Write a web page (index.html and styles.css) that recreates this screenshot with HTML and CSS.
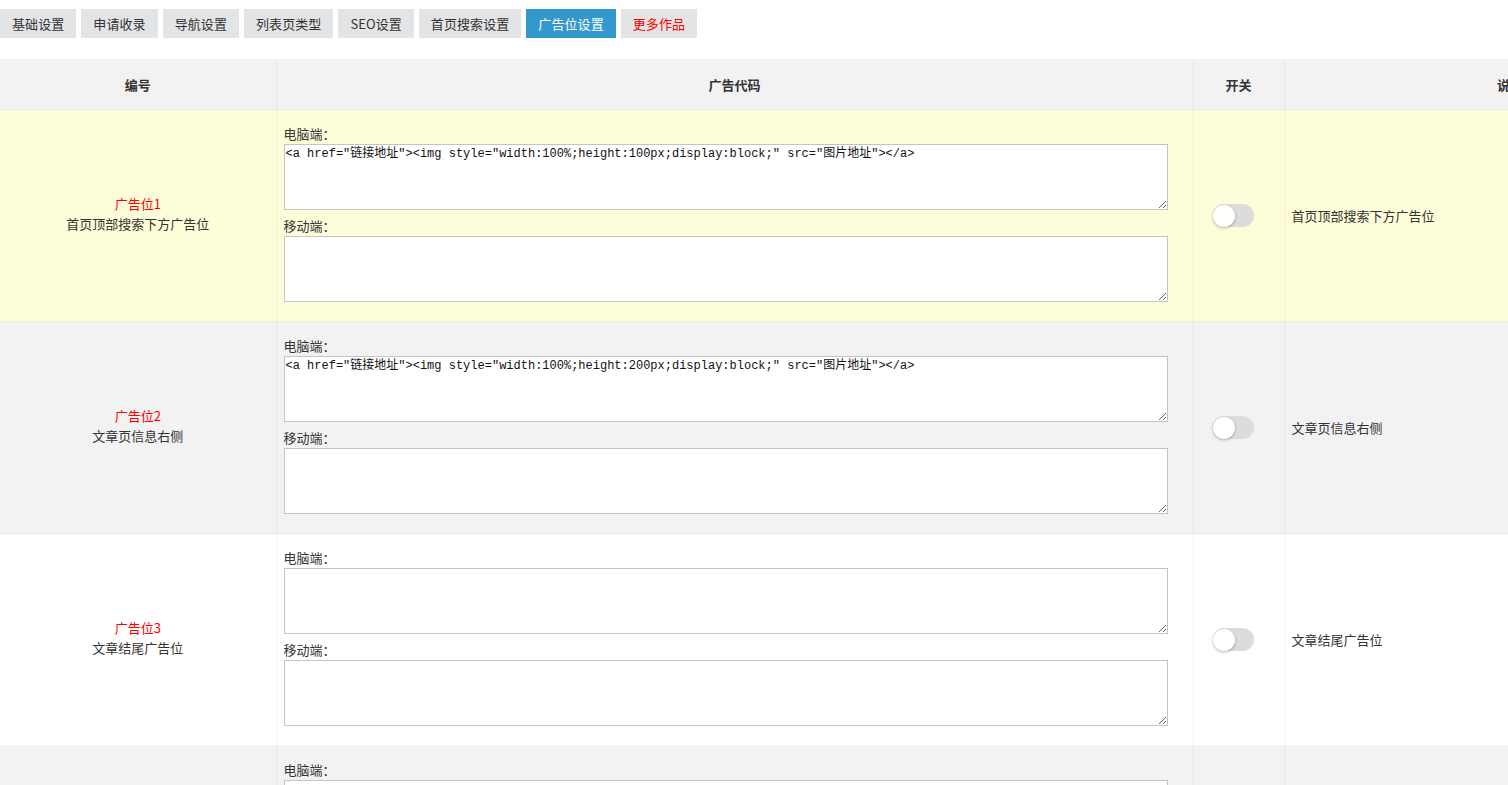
FILE: index.html
```html
<!DOCTYPE html>
<html lang="zh-CN">
<head>
<meta charset="utf-8">
<title>广告位设置</title>
<link rel="stylesheet" href="styles.css">
</head>
<body>
<div class="page">
  <nav class="tabs">
    <a class="tab">基础设置</a>
    <a class="tab">申请收录</a>
    <a class="tab">导航设置</a>
    <a class="tab">列表页类型</a>
    <a class="tab">SEO设置</a>
    <a class="tab">首页搜索设置</a>
    <a class="tab active">广告位设置</a>
    <a class="tab more">更多作品</a>
  </nav>
  <div class="table-wrap">
    <table class="ad-table">
      <colgroup>
        <col class="c-id"><col class="c-code"><col class="c-switch"><col class="c-desc">
      </colgroup>
      <thead>
        <tr><th>编号</th><th>广告代码</th><th>开关</th><th>说明</th></tr>
      </thead>
      <tbody>
        <tr class="row-yellow">
          <td class="id"><div class="name">广告位1</div><div>首页顶部搜索下方广告位</div></td>
          <td class="code">
            <div class="label">电脑端：</div>
            <textarea class="box">&lt;a href="链接地址"&gt;&lt;img style="width:100%;height:100px;display:block;" src="图片地址"&gt;&lt;/a&gt;</textarea>
            <div class="label">移动端：</div>
            <textarea class="box"></textarea>
          </td>
          <td class="sw"><span class="toggle"><span class="knob"></span></span></td>
          <td class="desc">首页顶部搜索下方广告位</td>
        </tr>
        <tr class="row-gray">
          <td class="id"><div class="name">广告位2</div><div>文章页信息右侧</div></td>
          <td class="code">
            <div class="label">电脑端：</div>
            <textarea class="box">&lt;a href="链接地址"&gt;&lt;img style="width:100%;height:200px;display:block;" src="图片地址"&gt;&lt;/a&gt;</textarea>
            <div class="label">移动端：</div>
            <textarea class="box"></textarea>
          </td>
          <td class="sw"><span class="toggle"><span class="knob"></span></span></td>
          <td class="desc">文章页信息右侧</td>
        </tr>
        <tr class="row-white">
          <td class="id"><div class="name">广告位3</div><div>文章结尾广告位</div></td>
          <td class="code">
            <div class="label">电脑端：</div>
            <textarea class="box"></textarea>
            <div class="label">移动端：</div>
            <textarea class="box"></textarea>
          </td>
          <td class="sw"><span class="toggle"><span class="knob"></span></span></td>
          <td class="desc">文章结尾广告位</td>
        </tr>
        <tr class="row-gray">
          <td class="id"><div class="name">广告位4</div><div>文章页评论上方</div></td>
          <td class="code">
            <div class="label">电脑端：</div>
            <textarea class="box"></textarea>
            <div class="label">移动端：</div>
            <textarea class="box"></textarea>
          </td>
          <td class="sw"><span class="toggle"><span class="knob"></span></span></td>
          <td class="desc">文章页评论上方</td>
        </tr>
      </tbody>
    </table>
  </div>
</div>
</body>
</html>
```
FILE: styles.css
```css
html, body {
  margin: 0;
  padding: 0;
  background: #fff;
  overflow: hidden;
}
body {
  font-family: "Noto Sans CJK SC", "Noto Sans", sans-serif;
  font-size: 13px;
  color: #333;
}
.page {
  width: 1508px;
  overflow: hidden;
}
.tabs {
  display: flex;
  gap: 5px;
  padding-top: 9px;
  height: 29px;
  margin-bottom: 21px;
}
.tab {
  display: block;
  height: 29px;
  line-height: 29px;
  padding: 0 12px;
  background: #e2e4e6;
  color: #333;
  font-size: 13px;
  letter-spacing: 0.08px;
  white-space: nowrap;
}
.tab.active {
  background: #3399cc;
  color: #fff;
}
.tab.more {
  color: #f00;
}
.table-wrap {
  width: 1508px;
  overflow: hidden;
}
.ad-table {
  width: 1736px;
  table-layout: fixed;
  border-collapse: collapse;
  border-spacing: 0;
}
.c-id { width: 276px; }
.c-code { width: 917px; }
.c-switch { width: 91px; }
.c-desc { width: 452px; }
.ad-table th,
.ad-table td {
  border: 1px solid rgba(0, 0, 0, 0.045);
  border-top: 0;
  padding: 0;
}
.ad-table th:first-child,
.ad-table td:first-child {
  border-left: 0;
}
.ad-table th {
  height: 50px;
  background: #f2f2f2;
  font-weight: bold;
  font-size: 13px;
  color: #333;
  text-align: center;
  vertical-align: middle;
}
.row-yellow td { background: #fefdda; }
.row-gray td { background: #f2f2f2; }
.row-white td { background: #fff; }
.id {
  text-align: center;
  vertical-align: middle;
  line-height: 20px;
  padding-bottom: 3px !important;
}
.name {
  color: #f00;
}
.code {
  padding: 13px 7px 14px !important;
  vertical-align: top;
}
.label {
  line-height: 21px;
  height: 21px;
}
.box {
  display: block;
  box-sizing: border-box;
  width: 884px;
  height: 66px;
  margin: 0 0 5px;
  padding: 1px 1px;
  border: 1px solid #c4c4c4;
  background: #fff;
  font-family: "Liberation Mono", "Noto Sans CJK SC", monospace;
  font-size: 12px;
  line-height: 16px;
  color: #111;
  resize: vertical;
  outline: none;
}
.sw {
  vertical-align: middle;
  padding-left: 19px !important;
}
.toggle {
  display: flex;
  align-items: center;
  width: 41px;
  height: 23px;
  border-radius: 12px;
  background: #dcdcdc;
}
.knob {
  display: block;
  width: 22px;
  height: 22px;
  border-radius: 50%;
  background: #fff;
  box-shadow: 0 1px 3px rgba(0, 0, 0, 0.3);
}
.desc {
  vertical-align: middle;
  padding-left: 7px !important;
  white-space: nowrap;
}
```
